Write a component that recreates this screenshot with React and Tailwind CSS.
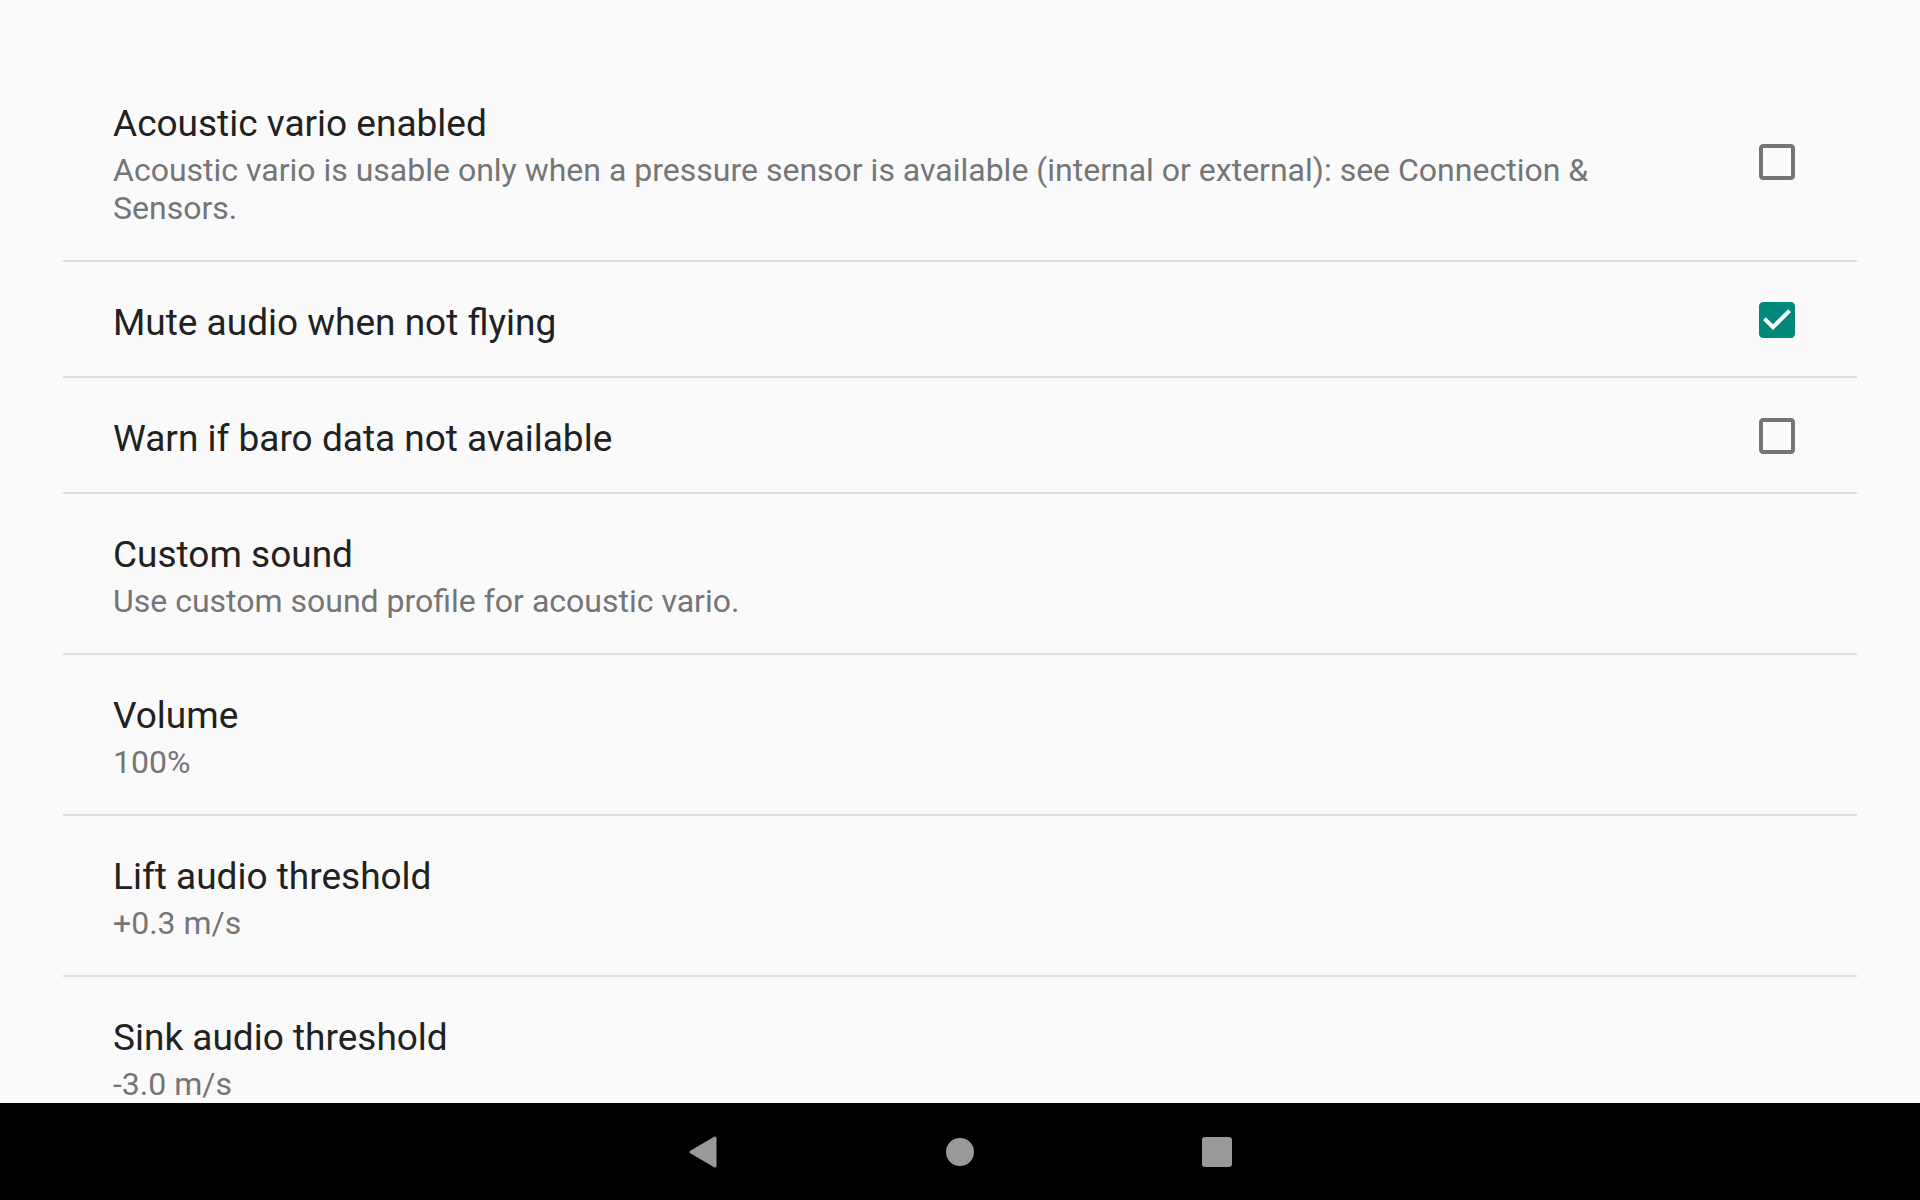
import React from 'react';

const prefs = [
  {
    title: 'Acoustic vario enabled',
    summary:
      'Acoustic vario is usable only when a pressure sensor is available (internal or external): see Connection & Sensors.',
    checkbox: false,
  },
  { title: 'Mute audio when not flying', checkbox: true },
  { title: 'Warn if baro data not available', checkbox: false },
  { title: 'Custom sound', summary: 'Use custom sound profile for acoustic vario.' },
  { title: 'Volume', summary: '100%' },
  { title: 'Lift audio threshold', summary: '+0.3 m/s' },
  { title: 'Sink audio threshold', summary: '-3.0 m/s' },
];

const CheckBox = ({ checked }) =>
  checked ? (
    <svg viewBox="0 0 24 24" className="w-[48px] h-[48px] -mt-[7px] -mb-[1px] shrink-0">
      <path
        fill="#00897b"
        d="M19 3H5c-1.11 0-2 .9-2 2v14c0 1.1.89 2 2 2h14c1.11 0 2-.9 2-2V5c0-1.1-.89-2-2-2z"
      />
      <path fill="#ffffff" d="M10 17l-5-5 1.41-1.41L10 14.17l7.59-7.59L19 8l-9 9z" />
    </svg>
  ) : (
    <svg viewBox="0 0 24 24" className="w-[48px] h-[48px] -mt-[7px] -mb-[1px] shrink-0">
      <path
        fill="#757575"
        d="M19 5v14H5V5h14m0-2H5c-1.1 0-2 .9-2 2v14c0 1.1.9 2 2 2h14c1.1 0 2-.9 2-2V5c0-1.1-.9-2-2-2z"
      />
    </svg>
  );

const PrefRow = ({ pref, first, last }) => {
  // bottom padding differs a little between the one-line and two-line rows
  const pb = first ? 'pb-[33px]' : pref.summary ? 'pb-[33px]' : 'pb-[31px]';
  return (
    <div
      className={`flex items-center pl-[50px] pr-[56px] pt-[39px] ${pb} ${
        last ? '' : 'border-b-2 border-[#dedede]'
      }`}
    >
      <div className="flex-1 min-w-0 mr-[72px]">
        <div className="text-[37px] leading-[44px] text-[#212121]">{pref.title}</div>
        {pref.summary && (
          <div className="mt-[5px] text-[32px] leading-[38px] text-[#757575]">{pref.summary}</div>
        )}
      </div>
      {pref.checkbox !== undefined && <CheckBox checked={pref.checkbox} />}
    </div>
  );
};

export default function App() {
  return (
    <div
      className="w-[1920px] h-[1200px] flex flex-col bg-[#fafafa] overflow-hidden"
      style={{ fontFamily: 'Roboto, "Noto Sans", sans-serif' }}
    >
      <div className="flex-1 min-h-0 overflow-hidden pt-[63px] px-[63px]">
        {prefs.map((p, i) => (
          <PrefRow key={p.title} pref={p} first={i === 0} last={i === prefs.length - 1} />
        ))}
      </div>

      {/* system navigation bar */}
      <div className="h-[97px] shrink-0 bg-black flex items-center justify-center gap-[228px]">
        <svg width="30" height="34" viewBox="0 0 30 34">
          <path
            d="M27 3 L3 17 L27 31 Z"
            fill="#999999"
            stroke="#999999"
            strokeWidth="3"
            strokeLinejoin="round"
          />
        </svg>
        <div className="w-[28px] h-[28px] rounded-full bg-[#999999]" />
        <div className="w-[30px] h-[30px] rounded-[3px] bg-[#999999]" />
      </div>
    </div>
  );
}
